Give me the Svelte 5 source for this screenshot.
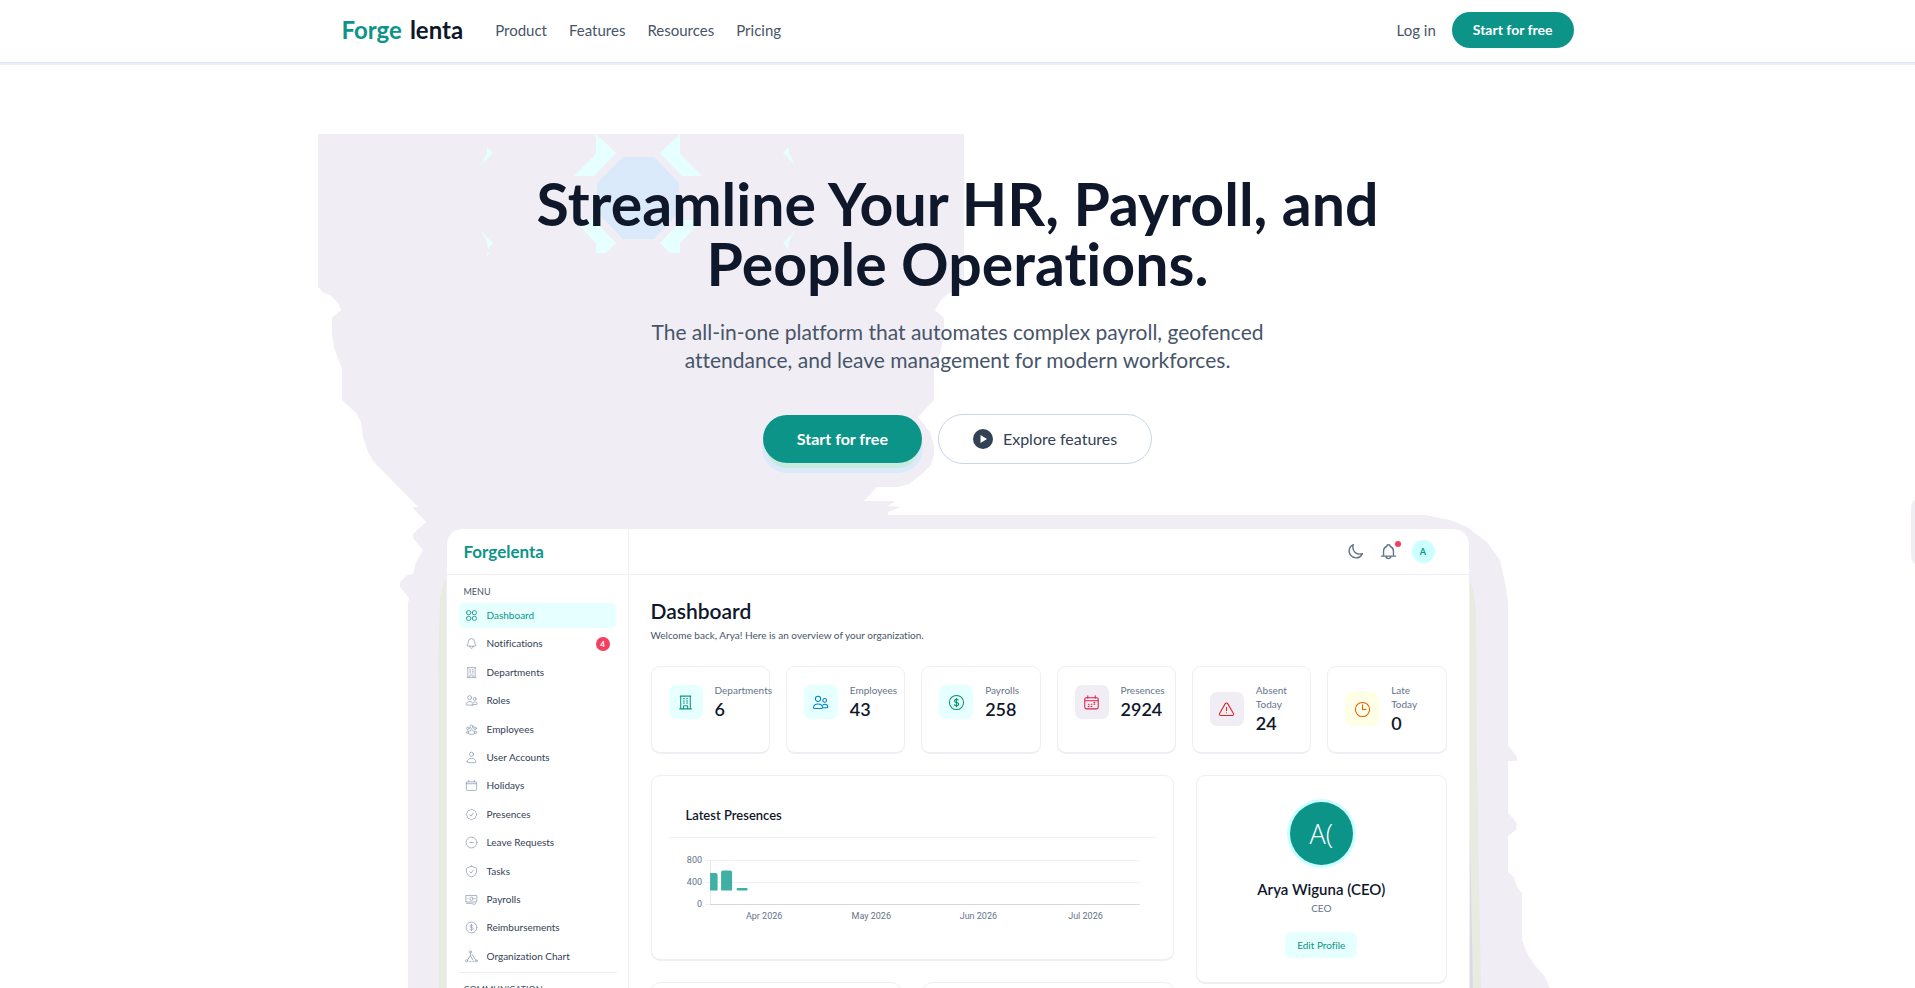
<script lang="ts">
  const navLinks = ["Product", "Features", "Resources", "Pricing"];

  const icons: Record<string, string> = {
    grid: "M3 6a3 3 0 0 1 3-3h1.500a3 3 0 0 1 3 3v1.500a3 3 0 0 1-3 3H6a3 3 0 0 1-3-3V6ZM13.500 6a3 3 0 0 1 3-3H18a3 3 0 0 1 3 3v1.500a3 3 0 0 1-3 3h-1.500a3 3 0 0 1-3-3V6ZM3 16.500a3 3 0 0 1 3-3h1.500a3 3 0 0 1 3 3V18a3 3 0 0 1-3 3H6a3 3 0 0 1-3-3v-1.500ZM13.500 16.500a3 3 0 0 1 3-3H18a3 3 0 0 1 3 3V18a3 3 0 0 1-3 3h-1.500a3 3 0 0 1-3-3v-1.500Z",
    bell: "M14.857 17.082a23.848 23.848 0 0 0 5.454-1.31A8.967 8.967 0 0 1 18 9.75V9A6 6 0 0 0 6 9v.75a8.967 8.967 0 0 1-2.312 6.022c1.733.64 3.56 1.085 5.455 1.31m5.714 0a24.255 24.255 0 0 1-5.714 0m5.714 0a3 3 0 1 1-5.714 0",
    building: "M3.750 21h16.500M4.500 3h15M5.250 3v18m13.500-18v18M9 6.750h1.500m-1.500 3h1.500m-1.500 3h1.500m3-6H15m-1.500 3H15m-1.500 3H15M9 21v-3.375c0-.621.504-1.125 1.125-1.125h3.750c.621 0 1.125.504 1.125 1.125V21",
    users: "M13.500 20.500H3.500c-1 0-1.600-.6-1.500-1.500.4-3 3-5 6.500-5s6.100 2 6.500 5c.1.900-.5 1.500-1.500 1.500ZM12.200 6.800a3.700 3.700 0 1 1-7.400 0 3.700 3.700 0 0 1 7.400 0ZM20.500 9a2.600 2.600 0 1 1-5.200 0 2.600 2.600 0 0 1 5.200 0ZM15.200 15.600c.8-.7 1.800-1.100 3-1.100 2.300 0 4 1.500 4.100 3.600 0 .8-.5 1.400-1.300 1.400h-5.600",
    group: "M18 18.720a9.094 9.094 0 0 0 3.741-.479 3 3 0 0 0-4.682-2.720m.940 3.198.001.031c0 .225-.012.447-.037.666A11.944 11.944 0 0 1 12 21c-2.170 0-4.207-.576-5.963-1.584A6.062 6.062 0 0 1 6 18.719m12 0a5.971 5.971 0 0 0-.941-3.197m0 0A5.995 5.995 0 0 0 12 12.750a5.995 5.995 0 0 0-5.058 2.772m0 0a3 3 0 0 0-4.681 2.720 8.986 8.986 0 0 0 3.740.477m.940-3.197a5.971 5.971 0 0 0-.940 3.197M15 6.750a3 3 0 1 1-6 0 3 3 0 0 1 6 0Zm6 3a2.250 2.250 0 1 1-4.500 0 2.250 2.250 0 0 1 4.500 0Zm-13.500 0a2.250 2.250 0 1 1-4.500 0 2.250 2.250 0 0 1 4.500 0Z",
    user: "M15.750 6a3.750 3.750 0 1 1-7.500 0 3.750 3.750 0 0 1 7.500 0ZM3.800 19.500c.8-3.600 4-6 8.200-6s7.400 2.400 8.200 6c.2 1.200-.5 2-1.700 2h-13c-1.200 0-1.900-.8-1.700-2Z",
    calendar: "M6.750 2.500v2.750M17.250 2.500v2.750M2.500 8.750h19M2.500 7.500a2.250 2.250 0 0 1 2.250-2.250h14.500A2.250 2.250 0 0 1 21.500 7.500v11.250A2.250 2.250 0 0 1 19.250 21H4.750a2.250 2.250 0 0 1-2.250-2.250V7.500Z",
    calendarDays: "M6.750 2.500v3.500M17.250 2.500v3.500M2.500 9.500h19M2.500 7.500a2.250 2.250 0 0 1 2.250-2.250h14.500A2.250 2.250 0 0 1 21.500 7.500v11.250A2.250 2.250 0 0 1 19.250 21H4.750a2.250 2.250 0 0 1-2.250-2.250V7.500ZM7.500 17.500h1M11.500 17.500h1M7.500 14.500h1M11.500 14.500h1M15.500 14.500h1M15.500 12.200h1",
    badge: "M9 12.750 11.250 15 15 9.750M21.500 12c0 1.300-.7 2.500-1.700 3.200a4 4 0 0 1-1.100 3.500 4 4 0 0 1-3.500 1.100c-.7 1-1.900 1.700-3.200 1.700s-2.500-.7-3.200-1.700a4 4 0 0 1-3.500-1.100 4 4 0 0 1-1.100-3.500C3.200 14.500 2.500 13.300 2.500 12s.7-2.500 1.700-3.200a4 4 0 0 1 1.100-3.500 4 4 0 0 1 3.500-1.100c.7-1 1.900-1.700 3.200-1.700s2.500.7 3.200 1.700a4 4 0 0 1 3.500 1.100 4 4 0 0 1 1.100 3.500c1 .7 1.700 1.900 1.700 3.200Z",
    minus: "M15 12H9m13 0a10 10 0 1 1-20 0 10 10 0 0 1 20 0Z",
    shield: "M9 12.750 11.250 15 15 9.750M12 2.200l8.400 3.200c.7.300 1.100.8 1.100 1.600V11c0 5-3.700 9.200-9.500 11.200C6.200 20.200 2.500 16 2.500 11V7c0-.8.4-1.300 1.100-1.600L12 2.200Z",
    banknotes: "M2.250 18.750a60.070 60.070 0 0 1 15.797 2.101c.727.198 1.453-.342 1.453-1.096V18.750M2.250 4.500h19.500v12H2.250ZM15 10.500a3 3 0 1 1-6 0 3 3 0 0 1 6 0ZM5 10.500h.8M18.200 10.500h.8",
    dollar: "M12 6v12m-3-2.818.879.659c1.171.879 3.070.879 4.242 0 1.172-.879 1.172-2.303 0-3.182C13.536 12.219 12.768 12 12 12c-.725 0-1.450-.220-2.003-.659-1.106-.879-1.106-2.303 0-3.182s2.900-.879 4.006 0l.415.330M22 12a10 10 0 1 1-20 0 10 10 0 0 1 20 0Z",
    org: "M12 3.500a2 2 0 1 1-4 0 2 2 0 0 1 4 0ZM10 5.500v4.500M10 10 5 18M10 10l4 8M13 8l6 9.500M5 20a2 2 0 1 1-4 0 2 2 0 0 1 4 0ZM22.500 20a2 2 0 1 1-4 0 2 2 0 0 1 4 0ZM9 21h2M14 21h2",
    warning: "M12 9v4.500M12 16.700h.01M10.300 3.700 2.200 17.500A2 2 0 0 0 3.900 20.500h16.200a2 2 0 0 0 1.700-3L13.700 3.700a2 2 0 0 0-3.400 0Z",
    clock: "M12 5.500v6.500h5M22 12a10 10 0 1 1-20 0 10 10 0 0 1 20 0Z",
    moon: "M21.752 15.002A9.720 9.720 0 0 1 18 15.750c-5.385 0-9.750-4.365-9.750-9.750 0-1.330.266-2.597.748-3.752A9.753 9.753 0 0 0 3 11.250C3 16.635 7.365 21 12.750 21a9.753 9.753 0 0 0 9.002-5.998Z",
    alarm: "M2 18.500h20M5 18.500v-7a7 7 0 0 1 4.500-6.600M19 18.500v-7a7 7 0 0 0-4.500-6.600M9.500 5a2.500 2.500 0 0 1 5 0M8.500 18.500a3.500 3.500 0 0 0 7 0"
  };

  const menu = [
    { label: "Dashboard", icon: "grid", active: true },
    { label: "Notifications", icon: "bell", count: 4 },
    { label: "Departments", icon: "building" },
    { label: "Roles", icon: "users" },
    { label: "Employees", icon: "group" },
    { label: "User Accounts", icon: "user" },
    { label: "Holidays", icon: "calendar" },
    { label: "Presences", icon: "badge" },
    { label: "Leave Requests", icon: "minus" },
    { label: "Tasks", icon: "shield" },
    { label: "Payrolls", icon: "banknotes" },
    { label: "Reimbursements", icon: "dollar" },
    { label: "Organization Chart", icon: "org" }
  ];

  const stats = [
    { label: "Departments", value: 6, icon: "building", tone: "teal" },
    { label: "Employees", value: 43, icon: "users", tone: "blue" },
    { label: "Payrolls", value: 258, icon: "dollar", tone: "green" },
    { label: "Presences", value: 2924, icon: "calendarDays", tone: "rose" },
    { label: "Absent Today", value: 24, icon: "warning", tone: "red" },
    { label: "Late Today", value: 0, icon: "clock", tone: "orange" }
  ];

  const gridLines = [
    { label: "800", y: 24 },
    { label: "400", y: 46 },
    { label: "0", y: 68 }
  ];

  const months = [
    { label: "Apr 2026", x: 95 },
    { label: "May 2026", x: 202 },
    { label: "Jun 2026", x: 309 },
    { label: "Jul 2026", x: 416 }
  ];
</script>

{#snippet icon(name: string)}
  <svg class="icon" viewBox="0 0 24 24" aria-hidden="true"><path d={icons[name]} /></svg>
{/snippet}

<div class="page">
  <header class="site-header">
    <div class="header-inner">
      <a class="logo" href="/"><span>Forge</span> <span class="dark">lenta</span></a>
      <nav aria-label="Main">
        {#each navLinks as link}
          <a href={`#${link.toLowerCase()}`}>{link}</a>
        {/each}
      </nav>
      <div class="account">
        <a href="#login">Log in</a>
        <a class="pill small" href="#signup">Start for free</a>
      </div>
    </div>
  </header>

  <main class="hero">
    <svg class="backdrop" viewBox="318 65 1280 923" aria-hidden="true">
      <path
        fill="#f0eef4"
        d="M318 134H964V287L949 293 941 300 935 310 944 318V335L941 350 934 370V400L918 417 922 422 930 432 934 445V455L931 465 922 474 909 484 898 487H877L864 501H895L888 506 901 507 888 512V515H1425L1450 520 1467 527 1487 542 1500 560 1506 587 1508 603V745L1517 757V761H1508V813L1517 823 1516 830 1508 836V872L1514 877 1517 887 1522 893V940L1527 953 1533 963 1545 977 1550 988V1300H408V603L409 598 400 587V582L407 575 413 574 416 562 423 550 413 538V534L426 522 412 507H418L373 461 368 452 363 437 361 422 356 413 342 400V369L334 348 332 333V318L341 310 338 303 330 295 324 293 318 287Z"
      />
      <path fill="#dbeafa" d="M623 157H654L679 183V212L654 239H623L597 212V183Z" />
      <path
        fill="#e6ffff"
        d="M596 134 616 153 594 176H574L596 154ZM680 134 660 153 682 176H702L680 154ZM574 220H594L616 243 606 253H596V243ZM702 220H682L660 243 670 253H680V243ZM487 147 493 153 481 165 487 153ZM481 231 493 243 488 249 487 242ZM487 253H490L487 256ZM789 147 783 153 795 165 789 153ZM795 231 783 243 788 249 789 242Z"
      />
      <path fill="#e8ebe0" d="M447 575 442 588 440 600 438 667 439 690V1300H600V575ZM1469 578 1473 590 1476 610 1477 760 1481 988V1300H1400V578Z" />
      <path fill="#dcdae4" d="M1469 838H1470L1473 988V1300H1460Z" />
    </svg>
    <div class="side-tab" aria-hidden="true"></div>

    <div class="intro">
      <h1>Streamline Your HR, Payroll, and People Operations.</h1>
      <p class="lead">The all-in-one platform that automates complex payroll, geofenced attendance, and leave management for modern workforces.</p>
      <div class="actions">
        <a class="pill large" href="#signup">Start for free</a>
        <a class="pill outline" href="#features">
          <svg viewBox="0 0 20 20" aria-hidden="true">
            <circle cx="10" cy="10" r="10" fill="#334155" />
            <path d="M7.500 6 14 10l-6.500 4Z" fill="#fff" />
          </svg>
          Explore features
        </a>
      </div>
    </div>

    <section class="preview" aria-label="Dashboard preview">
      <aside>
        <div class="brand">Forgelenta</div>
        <h3>MENU</h3>
        <ul>
          {#each menu as item}
            <li>
              <a class:active={item.active} href={`#${item.icon}`}>
                {@render icon(item.icon)}
                {item.label}
                {#if item.count}<span class="count">{item.count}</span>{/if}
              </a>
            </li>
          {/each}
        </ul>
        <h3 class="next">COMMUNICATION</h3>
      </aside>

      <div class="workspace">
        <div class="topbar">
          <button type="button" aria-label="Dark mode">{@render icon("moon")}</button>
          <button class="alerts" type="button" aria-label="Notifications">{@render icon("alarm")}</button>
          <span class="initial">A</span>
        </div>

        <div class="content">
          <h2>Dashboard</h2>
          <p class="welcome">Welcome back, Arya! Here is an overview of your organization.</p>

          <div class="stats">
            {#each stats as stat}
              <div class="card stat">
                <span class={`tile ${stat.tone}`}>{@render icon(stat.icon)}</span>
                <div>
                  <div class="stat-label">{stat.label}</div>
                  <div class="stat-value">{stat.value}</div>
                </div>
              </div>
            {/each}
          </div>

          <div class="columns">
            <div class="left">
              <div class="card chart">
                <h4>Latest Presences</h4>
                <svg viewBox="0 2 487 88" role="img" aria-label="Latest presences per month">
                  {#each gridLines as line}
                    <path d={`M36 ${line.y}.500H470`} stroke="#f0eef4" />
                    <text x="33" y={line.y + 3} text-anchor="end">{line.label}</text>
                  {/each}
                  <path d="M41 68.500H470" stroke="#d8d6e2" />
                  <path d="M41.500 24V68" stroke="#e8ebe0" />
                  <g fill="#3fb0a3">
                    <path d="M41 37h5.500a2 2 0 0 1 2 2v15.500H41Z" />
                    <path d="M52 54.500V36.500a2 2 0 0 1 2-2h7a2 2 0 0 1 2 2v18Z" />
                    <rect x="67.500" y="52" width="11" height="2.500" rx="1" />
                  </g>
                  {#each months as month}
                    <text x={month.x} y="83" text-anchor="middle">{month.label}</text>
                  {/each}
                </svg>
              </div>
              <div class="card blank"></div>
              <div class="card blank"></div>
            </div>

            <div class="card profile">
              <div class="avatar">A(</div>
              <h4>Arya Wiguna (CEO)</h4>
              <p>CEO</p>
              <button type="button">Edit Profile</button>
            </div>
          </div>
        </div>
      </div>
    </section>
  </main>
</div>

<style>
  :global(body) {
    margin: 0;
  }

  .page {
    --teal: #0d9488;
    --ink: #0f172a;
    --slate: #475569;
    --line: #f0eef4;
    height: 100vh;
    overflow: hidden auto;
    scrollbar-width: none;
    color: var(--ink);
    background: #fff;
    font-family: Lato, "Open Sans", sans-serif;
    font-variant-ligatures: none;
  }

  h1,
  h2,
  h3,
  h4,
  p,
  ul {
    margin: 0;
    padding: 0;
  }

  a {
    color: inherit;
    text-decoration: none;
  }

  button {
    padding: 0;
    border: 0;
    color: inherit;
    font: inherit;
    background: transparent;
  }

  .icon {
    flex: none;
    fill: none;
    stroke: currentColor;
    stroke-width: 1.5;
    stroke-linecap: round;
    stroke-linejoin: round;
  }

  .site-header {
    border-bottom: 1px solid #dbeafa;
    box-shadow: 0 2px 0 var(--line);
  }

  .header-inner {
    box-sizing: border-box;
    max-width: 1280px;
    margin: 0 auto;
    padding: 12px 24px 14px;
    display: flex;
    align-items: center;
  }

  .logo {
    display: flex;
    gap: 8px;
    color: var(--teal);
    font-size: 24px;
    line-height: 32px;
    font-weight: 700;
  }

  .logo .dark {
    color: var(--ink);
  }

  nav {
    display: flex;
    gap: 22px;
    margin-left: 32px;
    color: var(--slate);
    font-size: 15px;
    line-height: 20px;
  }

  .account {
    display: flex;
    align-items: center;
    gap: 16px;
    margin-left: auto;
    color: var(--slate);
    font-size: 15px;
    line-height: 20px;
  }

  .pill {
    border-radius: 999px;
    color: #fff;
    font-weight: 700;
    background: var(--teal);
  }

  .pill.small {
    padding: 8px 21px;
    font-size: 14px;
  }

  .hero {
    position: relative;
    padding-top: 111px;
  }

  .backdrop {
    position: absolute;
    top: 2px;
    left: 50%;
    width: 1280px;
    height: 923px;
    margin-left: -640px;
    overflow: visible;
  }

  .side-tab {
    position: absolute;
    top: 437px;
    right: 0;
    width: 4px;
    height: 64px;
    border-radius: 4px 0 0 4px / 10px 0 0 10px;
    background: var(--line);
  }

  .intro {
    position: relative;
    display: flex;
    flex-direction: column;
    align-items: center;
    text-align: center;
  }

  h1 {
    max-width: 896px;
    font-size: 59px;
    line-height: 60px;
    font-weight: 700;
  }

  .lead {
    max-width: 640px;
    padding-top: 24px;
    color: var(--slate);
    font-size: 21px;
    line-height: 28px;
  }

  .actions {
    display: flex;
    align-items: center;
    gap: 16px;
    padding-top: 40px;
    font-size: 16px;
    line-height: 24px;
  }

  .pill.large {
    padding: 12px 34px;
    box-shadow: 0 8px 0 -3px #c8ebe0, 0 9px 0 1px #dbeafa;
  }

  .pill.outline {
    display: flex;
    align-items: center;
    gap: 10px;
    padding: 12px 34px;
    border: 1px solid #c9d5e8;
    color: #334155;
    font-weight: 400;
    background: #fff;
  }

  .pill.outline svg {
    width: 20px;
    height: 20px;
  }

  .preview {
    position: relative;
    box-sizing: border-box;
    width: 100%;
    max-width: 1024px;
    margin: 64px auto 0;
    display: grid;
    grid-template-columns: 182px minmax(0, 1fr);
    border: 1px solid var(--line);
    border-radius: 16px;
    overflow: hidden;
    background: #fff;
  }

  aside {
    border-right: 1px solid var(--line);
  }

  .brand {
    padding: 0 17px;
    border-bottom: 1px solid var(--line);
    color: var(--teal);
    font-size: 17px;
    line-height: 45px;
    font-weight: 700;
  }

  h3 {
    padding: 11px 17px 5px;
    color: var(--slate);
    font-size: 9px;
    line-height: 12px;
    font-weight: 400;
  }

  ul {
    display: flex;
    flex-direction: column;
    justify-content: space-between;
    height: 366px;
    padding: 0 12px;
    list-style: none;
  }

  li a {
    display: flex;
    align-items: center;
    gap: 9px;
    padding: 0 6px;
    border-radius: 5px;
    color: #334155;
    font-size: 10px;
    line-height: 25px;
  }

  li a.active {
    color: var(--teal);
    background: #e6ffff;
  }

  li .icon {
    width: 13px;
    height: 13px;
    color: #94a3b8;
  }

  li .active .icon {
    color: var(--teal);
  }

  .count {
    width: 14px;
    margin-left: auto;
    border-radius: 50%;
    color: #fff;
    font-size: 8px;
    line-height: 14px;
    font-weight: 700;
    text-align: center;
    background: #f43f5e;
  }

  .next {
    margin: 3px 11px 0;
    padding: 11px 6px;
    border-top: 1px solid var(--line);
  }

  .topbar {
    display: flex;
    align-items: center;
    justify-content: flex-end;
    gap: 13px;
    height: 45px;
    padding-right: 34px;
    border-bottom: 1px solid var(--line);
    color: #64748b;
  }

  .topbar button {
    position: relative;
    width: 20px;
    height: 17px;
  }

  .topbar .icon {
    display: block;
    width: 17px;
    height: 17px;
    margin: 0 auto;
    stroke-width: 2;
  }

  .alerts::after {
    content: "";
    position: absolute;
    top: -2px;
    right: -2px;
    width: 6px;
    height: 6px;
    border-radius: 50%;
    background: #f43f5e;
  }

  .initial {
    width: 23px;
    border-radius: 50%;
    color: var(--teal);
    font-size: 9px;
    line-height: 23px;
    font-weight: 700;
    text-align: center;
    background: #ccffff;
  }

  .content {
    padding: 22px;
  }

  h2 {
    font-size: 21px;
    line-height: 28px;
    font-weight: 600;
  }

  .welcome {
    color: var(--slate);
    font-size: 10px;
    line-height: 20px;
  }

  .card {
    box-sizing: border-box;
    border: 1px solid var(--line);
    border-radius: 9px;
    background: #fff;
    box-shadow: 0 1px 0 var(--line);
  }

  .stats {
    display: grid;
    grid-template-columns: repeat(6, minmax(0, 1fr));
    gap: 16px;
    margin-top: 21px;
  }

  .stat {
    display: grid;
    grid-template-columns: 34px minmax(0, 1fr);
    align-content: start;
    align-items: center;
    gap: 12px;
    padding: 16px 17px 17px;
  }

  .tile {
    display: grid;
    place-items: center;
    width: 34px;
    height: 34px;
    border-radius: 7px;
  }

  .tile .icon {
    width: 17px;
    height: 17px;
  }

  .teal {
    color: #0d9488;
    background: #e6ffff;
  }

  .blue {
    color: #0284c7;
    background: #e6ffff;
  }

  .green {
    color: #059669;
    background: #e6ffff;
  }

  .rose {
    color: #e11d48;
    background: #f0eef4;
  }

  .red {
    color: #dc2626;
    background: #f0eef4;
  }

  .orange {
    color: #ea580c;
    background: #ffffe6;
  }

  .stat-label {
    color: #64748b;
    font-size: 10px;
    line-height: 14px;
  }

  .stat-value {
    font-size: 18px;
    line-height: 24px;
    font-weight: 600;
  }

  .columns {
    display: grid;
    grid-template-columns: 23fr 11fr;
    align-items: start;
    gap: 22px;
    margin-top: 22px;
  }

  .left {
    display: grid;
    grid-template-columns: 1fr 1fr;
    gap: 22px;
  }

  .chart {
    grid-column: 1 / -1;
    padding: 17px 17px 33px;
  }

  .chart h4 {
    padding: 12px 17px;
    border-bottom: 1px solid var(--line);
    font-size: 13px;
    line-height: 20px;
    font-weight: 600;
  }

  .chart svg {
    display: block;
    width: 100%;
  }

  .chart text {
    fill: #64748b;
    font-family: Roboto, sans-serif;
    font-size: 9px;
  }

  .blank {
    height: 180px;
  }

  .profile {
    display: flex;
    flex-direction: column;
    align-items: center;
    padding: 26px 17px 24px;
  }

  .avatar {
    width: 63px;
    border-radius: 50%;
    box-shadow: 0 0 0 3px #ccffff;
    color: #fff;
    font-family: "Open Sans", sans-serif;
    font-size: 27px;
    line-height: 63px;
    font-weight: 300;
    text-align: center;
    background: var(--teal);
  }

  .profile h4 {
    padding-top: 12px;
    font-size: 15px;
    line-height: 24px;
    font-weight: 600;
  }

  .profile p {
    color: #64748b;
    font-size: 10px;
    line-height: 14px;
  }

  .profile button {
    margin-top: 17px;
    padding: 0 12px;
    border-radius: 7px;
    color: var(--teal);
    font-size: 10px;
    line-height: 26px;
    background: #e6ffff;
  }
</style>
